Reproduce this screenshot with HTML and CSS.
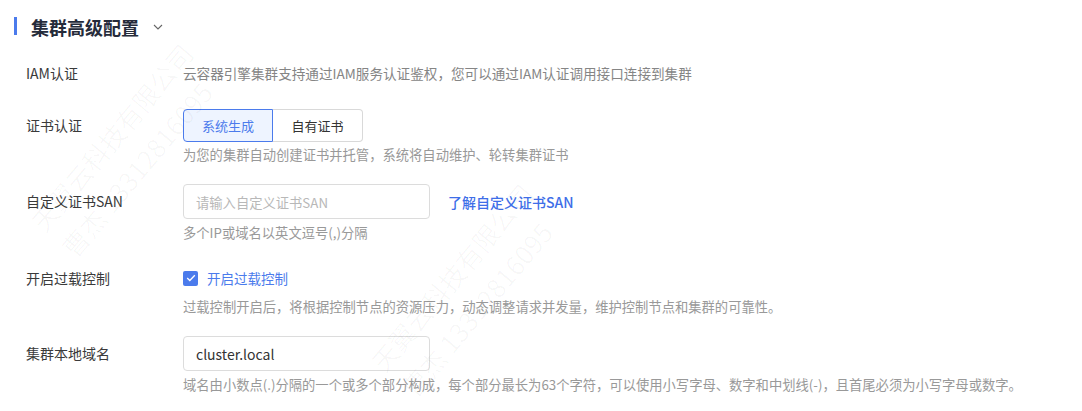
FILE: index.html
```html
<!DOCTYPE html>
<html>
<head>
    <title>集群高级配置</title>
    <link rel="stylesheet" href="styles.css">
</head>
<body>
    <div class="section">
        <div class="section-title">
            <span class="title-bar"></span>
            <h2>集群高级配置</h2>
            <svg class="chevron" width="10" height="6" viewBox="0 0 10 6">
                <path d="M1 1 L5 5 L9 1" fill="none" stroke="#666" stroke-width="1.1"/>
            </svg>
        </div>

        <div class="form-row">
            <label class="form-label">IAM认证</label>
            <div class="form-content">
                <div class="plain-text">云容器引擎集群支持通过IAM服务认证鉴权，您可以通过IAM认证调用接口连接到集群</div>
            </div>
        </div>

        <div class="form-row">
            <label class="form-label label-tall">证书认证</label>
            <div class="form-content">
                <div class="radio-group">
                    <button class="radio-btn active">系统生成</button>
                    <button class="radio-btn">自有证书</button>
                </div>
                <div class="hint">为您的集群自动创建证书并托管，系统将自动维护、轮转集群证书</div>
            </div>
        </div>

        <div class="form-row">
            <label class="form-label label-input">自定义证书SAN</label>
            <div class="form-content">
                <div class="input-line">
                    <input class="text-input" type="text" placeholder="请输入自定义证书SAN">
                    <a class="link" href="#">了解自定义证书SAN</a>
                </div>
                <div class="hint">多个IP或域名以英文逗号(,)分隔</div>
            </div>
        </div>

        <div class="form-row">
            <label class="form-label">开启过载控制</label>
            <div class="form-content">
                <label class="checkbox">
                    <span class="checkbox-box">
                        <svg width="10" height="8" viewBox="0 0 10 8">
                            <path d="M1.2 4 L3.8 6.5 L8.8 1.2" fill="none" stroke="#fff" stroke-width="1.3"/>
                        </svg>
                    </span>
                    <span class="checkbox-text">开启过载控制</span>
                </label>
                <div class="hint">过载控制开启后，将根据控制节点的资源压力，动态调整请求并发量，维护控制节点和集群的可靠性。</div>
            </div>
        </div>

        <div class="form-row">
            <label class="form-label label-input">集群本地域名</label>
            <div class="form-content">
                <input class="text-input" type="text" value="cluster.local">
                <div class="hint">域名由小数点(.)分隔的一个或多个部分构成，每个部分最长为63个字符，可以使用小写字母、数字和中划线(-)，且首尾必须为小写字母或数字。</div>
            </div>
        </div>
    </div>

    <div class="watermark wm-a">天翼云科技有限公司<br>曹杰 13312816095</div>
    <div class="watermark wm-b">天翼云科技有限公司<br>曹杰 13312816095</div>
</body>
</html>
```

FILE: styles.css
```css
body {
    margin: 0;
    font-family: "Noto Sans CJK SC", "Noto Sans", sans-serif;
    color: #333;
    background: #fff;
    overflow: hidden;
    position: relative;
    height: 411px;
}

.section {
    padding: 14px 0 0 14px;
}

.section-title {
    display: flex;
    align-items: center;
    height: 24px;
}

.title-bar {
    width: 3px;
    height: 18px;
    background-color: #4b7bec;
}

.section-title h2 {
    margin: 0 0 0 14px;
    font-size: 18px;
    line-height: 24px;
    font-weight: bold;
    color: #252b3a;
    position: relative;
    top: 1px;
}

.chevron {
    margin-left: 14px;
    position: relative;
    top: 1px;
}

.form-row {
    display: flex;
    margin-top: 19px;
    padding-left: 12px;
}

.form-row + .form-row {
    margin-top: 20px;
}

.form-label {
    width: 157px;
    flex-shrink: 0;
    font-size: 14px;
    line-height: 32px;
    color: #3a3a3a;
}

.label-tall {
    line-height: 33px;
}

.label-input {
    line-height: 35px;
}

.form-content {
    flex: 1;
}

.plain-text {
    font-size: 13.6px;
    line-height: 32px;
    color: #858585;
}

.radio-group {
    display: flex;
}

.radio-btn {
    width: 90px;
    height: 33px;
    font-family: inherit;
    font-size: 13px;
    color: #333;
    background: #fff;
    border: 1px solid #d9d9d9;
    padding: 0;
    cursor: pointer;
}

.radio-btn:first-child {
    border-radius: 4px 0 0 4px;
}

.radio-btn:last-child {
    border-radius: 0 4px 4px 0;
    border-left: none;
}

.radio-btn.active {
    color: #4b7bec;
    background: #eef4ff;
    border-color: #4b7bec;
}

.hint {
    margin-top: 4px;
    font-size: 13.3px;
    line-height: 18px;
    color: #999;
}

.input-line {
    display: flex;
    align-items: center;
}

.text-input {
    box-sizing: border-box;
    width: 247px;
    height: 35px;
    padding: 0 12px;
    border: 1px solid #dcdcdc;
    border-radius: 4px;
    font-family: inherit;
    font-size: 14px;
    color: #333;
    outline: none;
}

.text-input::placeholder {
    color: #b8b8b8;
    font-size: 13.3px;
}

.input-line + .hint,
.text-input + .hint {
    margin-top: 5px;
}

.link {
    margin-left: 18px;
    font-size: 14px;
    font-weight: 500;
    color: #3e6ee8;
    text-decoration: none;
}

.checkbox {
    display: flex;
    align-items: center;
    height: 32px;
}

.checkbox-box {
    width: 15px;
    height: 15px;
    border-radius: 2px;
    background-color: #4b7bec;
    display: flex;
    align-items: center;
    justify-content: center;
}

.checkbox-text {
    margin-left: 9px;
    font-size: 13.5px;
    color: #4b7bec;
}

.watermark {
    position: absolute;
    font-size: 26px;
    line-height: 40px;
    color: rgba(0, 0, 0, 0.03);
    white-space: nowrap;
    transform: rotate(-50deg);
    pointer-events: none;
}

.wm-a {
    left: 10px;
    top: 110px;
}

.wm-b {
    left: 350px;
    top: 250px;
}
```
